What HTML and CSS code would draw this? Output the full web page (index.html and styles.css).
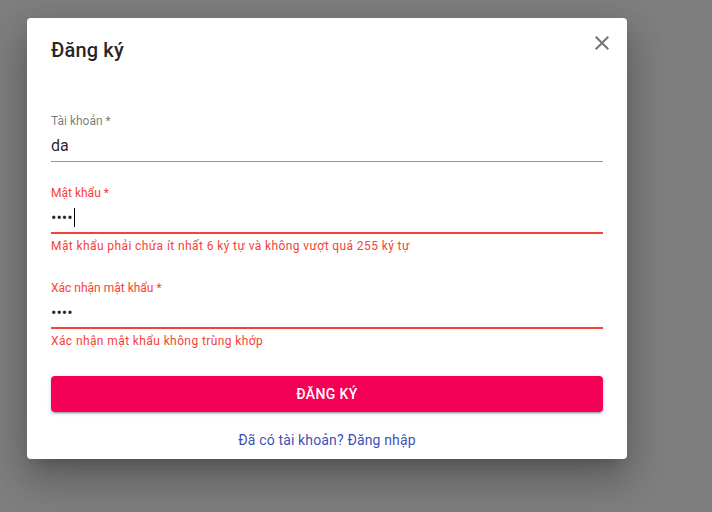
FILE: index.html
```html
<!DOCTYPE html>
<html lang="vi">
<head>
<meta charset="utf-8">
<title>Đăng ký</title>
<link rel="stylesheet" href="styles.css">
</head>
<body>
<div class="dialog">
  <button class="close" aria-label="Đóng">
    <svg viewBox="0 0 24 24" width="24" height="24"><path d="M19 6.41L17.59 5 12 10.59 6.41 5 5 6.41 10.59 12 5 17.59 6.41 19 12 13.41 17.59 19 19 17.59 13.41 12z"/></svg>
  </button>
  <h2 class="title">Đăng ký</h2>
  <div class="content">
    <div class="field">
      <div class="label">Tài khoản *</div>
      <div class="input"><span class="value">da</span></div>
    </div>
    <div class="field error">
      <div class="label">Mật khẩu *</div>
      <div class="input"><span class="value dots">••••</span><span class="caret"></span></div>
      <div class="helper">Mật khẩu phải chứa ít nhất 6 ký tự và không vượt quá 255 ký tự</div>
    </div>
    <div class="field error">
      <div class="label">Xác nhận mật khẩu *</div>
      <div class="input"><span class="value dots">••••</span></div>
      <div class="helper">Xác nhận mật khẩu không trùng khớp</div>
    </div>
    <button class="submit">Đăng ký</button>
    <a class="link" href="#">Đã có tài khoản? Đăng nhập</a>
  </div>
</div>
</body>
</html>
```

FILE: styles.css
```css
html, body {
  margin: 0;
  padding: 0;
}
body {
  width: 712px;
  height: 512px;
  overflow: hidden;
  background: #7f7f7f;
  font-family: Roboto, "Noto Sans", sans-serif;
  color: rgba(0, 0, 0, 0.87);
}
.dialog {
  position: relative;
  box-sizing: border-box;
  width: 600px;
  margin: 18px 0 0 27px;
  padding: 16px 24px 0;
  background: #fff;
  border-radius: 4px;
  box-shadow: 0 11px 15px -7px rgba(0,0,0,0.2), 0 24px 38px 3px rgba(0,0,0,0.14), 0 9px 46px 8px rgba(0,0,0,0.12);
}
.close {
  position: absolute;
  top: 13px;
  right: 13px;
  width: 24px;
  height: 24px;
  padding: 0;
  border: 0;
  background: none;
  fill: #757575;
  cursor: pointer;
}
.close svg { display: block; }
.title {
  margin: 0;
  font-size: 20px;
  font-weight: 500;
  line-height: 32px;
  letter-spacing: 0.0075em;
}
.content {
  display: flex;
  flex-direction: column;
  padding-top: 48px;
}
.field {
  display: flex;
  flex-direction: column;
  margin-bottom: 24px;
}
.field.error:nth-of-type(3) {
  margin-top: 1px;
}
.label {
  font-size: 12px;
  line-height: 12px;
  height: 16px;
  padding-top: 0.5px;
  box-sizing: border-box;
  color: rgba(0, 0, 0, 0.54);
}
.input {
  display: flex;
  align-items: center;
  height: 32px;
  box-sizing: border-box;
  padding: 6px 0 7px;
  font-size: 16px;
  line-height: 19px;
  border-bottom: 1px solid rgba(0, 0, 0, 0.42);
}
.dots {
  letter-spacing: 0;
}
.caret {
  width: 1px;
  height: 19px;
  margin-left: 1px;
  background: #000;
}
.error .label { color: #f44336; }
.error .input {
  border-bottom: 2px solid #f44336;
  padding-bottom: 6px;
}
.helper {
  margin-top: 3px;
  font-size: 12px;
  line-height: 19px;
  color: #f44336;
  letter-spacing: 0.03333em;
}
.submit {
  height: 36px;
  margin-top: 1px;
  border: 0;
  border-radius: 4px;
  background: #f50057;
  color: #fff;
  font-family: inherit;
  font-size: 14px;
  font-weight: 500;
  letter-spacing: 0.02857em;
  text-transform: uppercase;
  box-shadow: 0 3px 1px -2px rgba(0,0,0,0.2), 0 2px 2px 0 rgba(0,0,0,0.14), 0 1px 5px 0 rgba(0,0,0,0.12);
}
.link {
  align-self: center;
  margin: 18px 0 9px;
  font-size: 14px;
  line-height: 20px;
  color: #3f51b5;
  text-decoration: none;
  letter-spacing: 0.01071em;
}
```
